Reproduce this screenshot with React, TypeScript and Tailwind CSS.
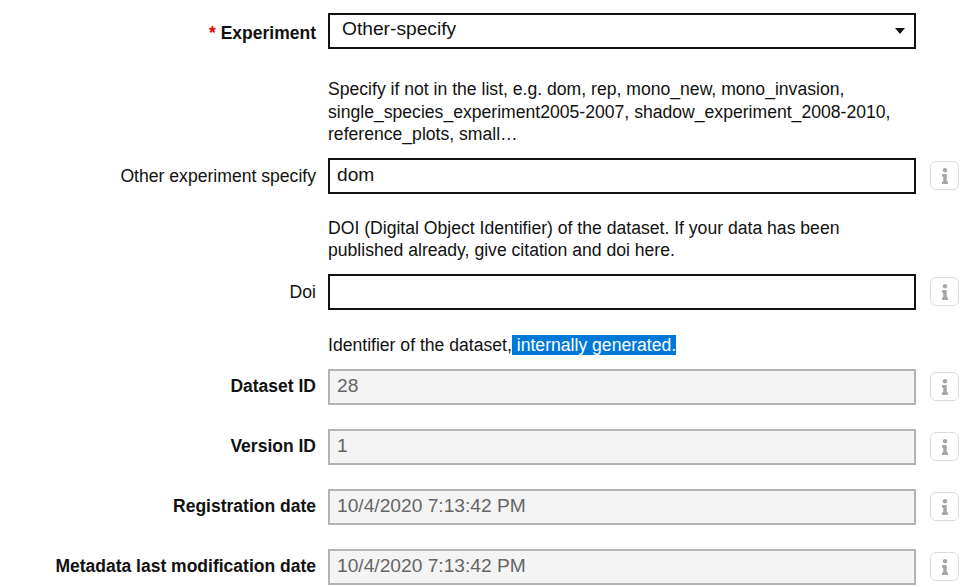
import * as React from "react";
import { FaInfo } from "react-icons/fa";

function InfoButton() {
  return (
    <div className="ml-[14px] flex h-[29px] w-[29px] shrink-0 items-center justify-center rounded-[6px] border-[1.5px] border-[#dcdcdc] bg-white text-[#a6a6a6]">
      <FaInfo className="h-[16px] w-[16px]" />
    </div>
  );
}

function Field({
  label,
  value,
  bold,
  readOnly,
  labelClass,
}: {
  label: string;
  value?: string;
  bold?: boolean;
  readOnly?: boolean;
  labelClass?: string;
}) {
  return (
    <div className="flex items-center">
      <div className={`w-[316px] shrink-0 text-right ${bold ? "text-[17.5px] font-bold" : ""} ${labelClass ?? ""}`}>
        {label}
      </div>
      <div
        className={`ml-3 flex h-[36px] w-[588px] shrink-0 items-center border-2 pl-[7px] text-[19.2px] ${
          readOnly ? "border-[#b3b3b3] bg-[#f4f4f4] text-[#666666]" : "border-[#111111] bg-white text-[#111111]"
        }`}
      >
        {value}
      </div>
      <InfoButton />
    </div>
  );
}

export default function App() {
  return (
    <div className="h-[587px] w-[969px] overflow-hidden bg-white pt-[13px] font-['Liberation_Sans',Arial,sans-serif] text-[17.6px] leading-[22.6px] text-[#111111]">
      {/* Experiment select */}
      <div className="flex items-center">
        <div className="w-[316px] shrink-0 pt-[5px] text-right text-[17.5px] font-bold">
          <span className="mr-[5px] text-[#e60000]">*</span>
          Experiment
        </div>
        <div className="ml-3 flex h-[36px] w-[588px] shrink-0 items-center justify-between border-2 border-[#111111] pb-[3px] pl-[12px] pr-[9px] text-[19.2px]">
          <span>Other-specify</span>
          <span className="mt-[2px] h-0 w-0 border-x-[5px] border-t-[6px] border-x-transparent border-t-[#111111]" />
        </div>
      </div>

      <p className="ml-[328px] mt-[29px] w-[590px]">
        Specify if not in the list, e.g. dom, rep, mono_new, mono_invasion, single_species_experiment2005-2007,
        shadow_experiment_2008-2010, reference_plots, small…
      </p>
      <div className="mt-[12px]">
        <Field label="Other experiment specify" value="dom" labelClass="pt-[2px]" />
      </div>

      <p className="ml-[328px] mt-[23px] w-[590px]">
        DOI (Digital Object Identifier) of the dataset. If your data has been published already, give citation and doi
        here.
      </p>
      <div className="mt-[12px]">
        <Field label="Doi" />
      </div>

      <p className="ml-[328px] mt-[24px] w-[590px]">
        Identifier of the dataset,
        <span className="bg-[#0078d7] text-white"> internally generated.</span>
      </p>

      <div className="mt-[12px] flex flex-col gap-[24px]">
        <Field label="Dataset ID" value="28" bold readOnly />
        <Field label="Version ID" value="1" bold readOnly />
        <Field label="Registration date" value="10/4/2020 7:13:42 PM" bold readOnly />
        <Field label="Metadata last modification date" value="10/4/2020 7:13:42 PM" bold readOnly />
      </div>
    </div>
  );
}
